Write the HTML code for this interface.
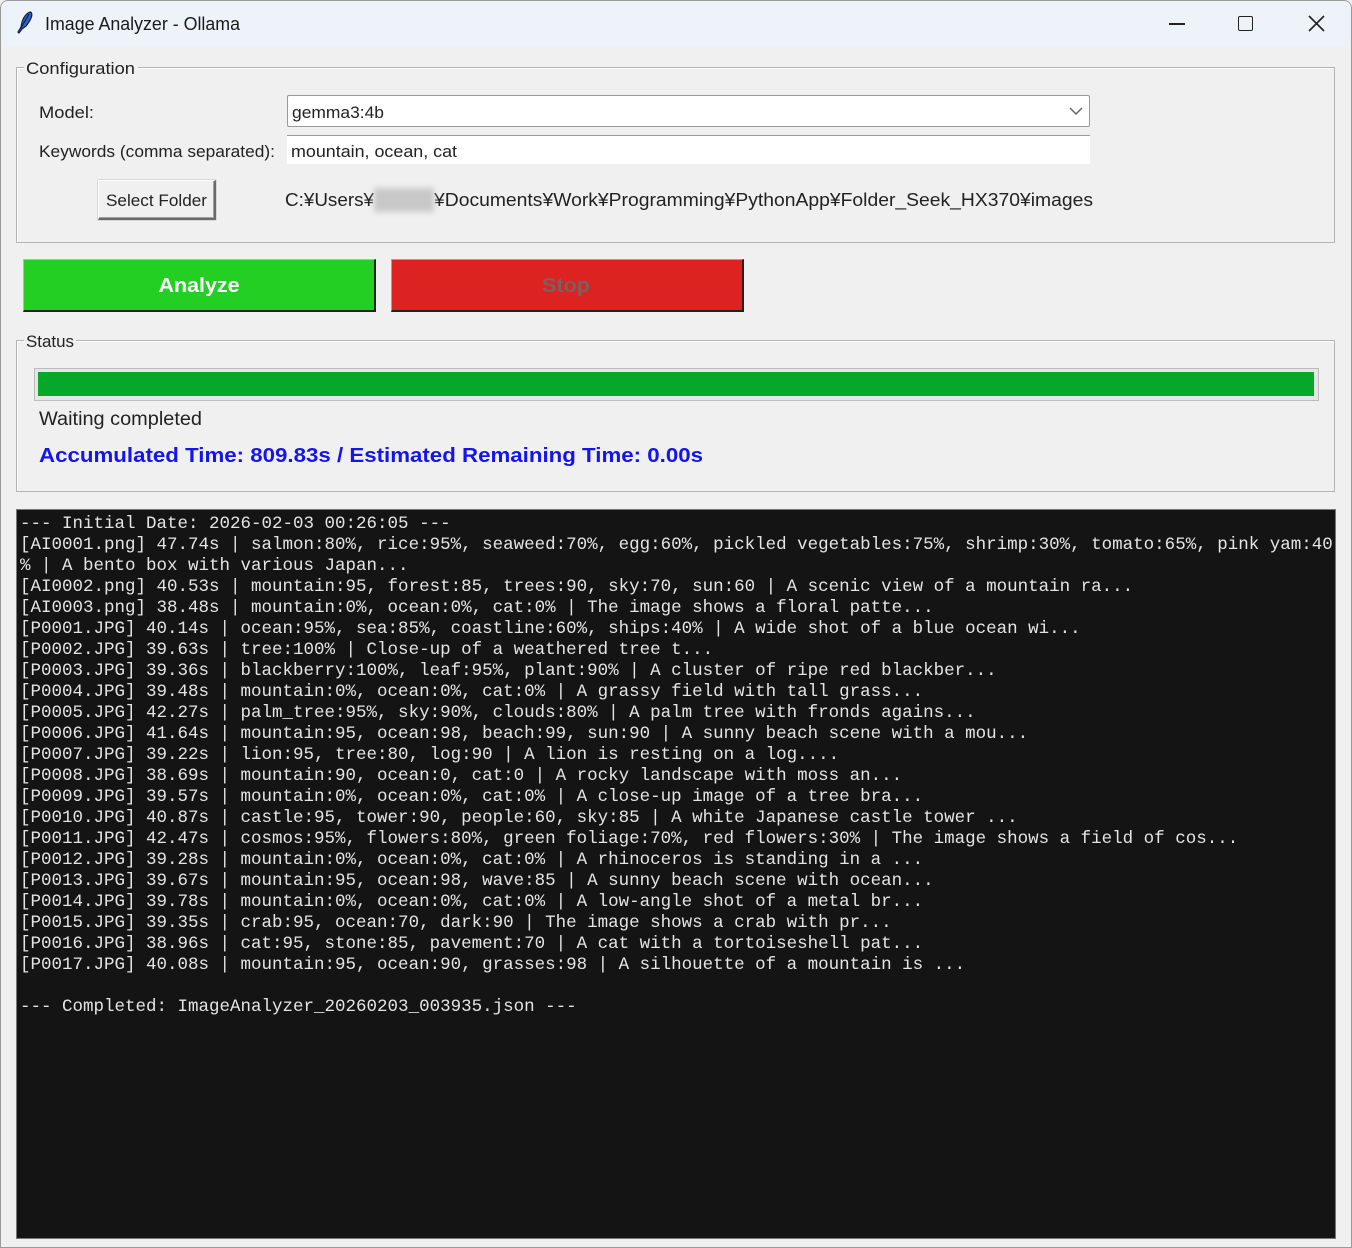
<!DOCTYPE html>
<html><head><meta charset="utf-8">
<style>
*{margin:0;padding:0;box-sizing:border-box}
body{width:1352px;height:1248px;background:#f0f0f0;position:relative;overflow:hidden;font-family:"Liberation Sans","DejaVu Sans",sans-serif;color:#111}
.abs{position:absolute}
svg.t{position:absolute;overflow:visible}
svg.t text{font-family:"Liberation Sans","DejaVu Sans",sans-serif}
.grp{position:absolute;border:1px solid #b4b4b4;box-shadow:1px 1px 0 #fff inset}
.log{position:absolute;left:16px;top:509px;width:1320px;height:730px;background:#141414;border:1px solid #777;padding:4px 0 0 3px;font-family:"Liberation Mono",monospace;font-size:17.5px;line-height:21px;color:#e4e4e4;white-space:pre;overflow:hidden}
</style></head><body>
<div class="abs" style="left:0;top:0;width:1352px;height:1248px;border:1px solid #9a9a9a;border-radius:8px 8px 0 0;pointer-events:none;z-index:5"></div>
<div class="abs" style="left:0;top:0;width:1352px;height:47px;background:#eef3fa;border-radius:8px 8px 0 0"></div>
<svg class="t" style="left:14px;top:10px" width="22" height="26" viewBox="0 0 22 26"><path d="M16 2 C20 3 17 10 12 16 L8 19 L5 23 L4 22 L7 17 C8 10 11 4 16 2Z" fill="#2d64c6" stroke="#102040" stroke-width="1.2"/><path d="M15 4 L7 18" stroke="#0b1a33" stroke-width="1"/></svg>
<svg class="t" style="left:45px;top:10px" width="200" height="28"><text x="0" y="20" font-size="18" fill="#1a1a1a" textLength="195" lengthAdjust="spacingAndGlyphs">Image Analyzer - Ollama</text></svg>
<div class="abs" style="left:1169px;top:23px;width:16px;height:1.5px;background:#222"></div>
<div class="abs" style="left:1238px;top:16px;width:15px;height:15px;border:1.5px solid #222;border-radius:2px"></div>
<svg class="t" style="left:1308px;top:15px" width="17" height="17"><path d="M1 1 L16 16 M16 1 L1 16" stroke="#222" stroke-width="1.6"/></svg>

<div class="grp" style="left:16px;top:67px;width:1319px;height:176px"></div>
<div class="abs" style="left:24px;top:56px;width:114px;height:22px;background:#f0f0f0"></div>
<svg class="t" style="left:26px;top:56px" width="120" height="24"><text x="0" y="18" font-size="17" fill="#222" textLength="109" lengthAdjust="spacingAndGlyphs">Configuration</text></svg>
<svg class="t" style="left:39px;top:100px" width="80" height="24"><text x="0" y="18" font-size="17" fill="#222" textLength="55" lengthAdjust="spacingAndGlyphs">Model:</text></svg>
<div class="abs" style="left:287px;top:95px;width:803px;height:32px;background:#fff;border:1px solid #999;border-radius:2px"></div>
<svg class="t" style="left:292px;top:100px" width="120" height="24"><text x="0" y="18" font-size="17" fill="#222" textLength="92" lengthAdjust="spacingAndGlyphs">gemma3:4b</text></svg>
<svg class="t" style="left:1068px;top:105px" width="16" height="12"><path d="M2 3 L8 9 L14 3" stroke="#666" stroke-width="1.5" fill="none"/></svg>
<svg class="t" style="left:39px;top:139px" width="250" height="24"><text x="0" y="18" font-size="17" fill="#222" textLength="236" lengthAdjust="spacingAndGlyphs">Keywords (comma separated):</text></svg>
<div class="abs" style="left:287px;top:135px;width:803px;height:29px;background:#fff;border-top:1px solid #9a9a9a"></div>
<svg class="t" style="left:291px;top:139px" width="200" height="24"><text x="0" y="18" font-size="17" fill="#222" textLength="166" lengthAdjust="spacingAndGlyphs">mountain, ocean, cat</text></svg>
<div class="abs" style="left:98px;top:180px;width:118px;height:40px;background:#f0f0f0;border:1px solid #fff;border-right:2px solid #6a6a6a;border-bottom:2px solid #6a6a6a;box-shadow:inset -1px -1px 0 #a0a0a0, 0 0 0 0.5px #c0c0c0"></div>
<svg class="t" style="left:106px;top:188px" width="110" height="24"><text x="0" y="18" font-size="17" fill="#222" textLength="101" lengthAdjust="spacingAndGlyphs">Select Folder</text></svg>
<svg class="t" style="left:285px;top:188px" width="820" height="26"><text x="0" y="18" font-size="18" fill="#222" textLength="89" lengthAdjust="spacingAndGlyphs">C:¥Users¥</text><text x="149" y="18" font-size="18" fill="#222" textLength="659" lengthAdjust="spacingAndGlyphs">¥Documents¥Work¥Programming¥PythonApp¥Folder_Seek_HX370¥images</text></svg>
<div class="abs" style="left:374px;top:188px;width:60px;height:24px;background:#c8c8c8;filter:blur(3px)"></div>

<div class="abs" style="left:23px;top:259px;width:353px;height:53px;background:#22cf22;border-top:1px solid #7be27b;border-left:1px solid #7be27b;border-right:2px solid #222;border-bottom:2px solid #222"></div>
<svg class="t" style="left:23px;top:270px" width="353" height="30"><text x="176" y="22" text-anchor="middle" font-size="20" font-weight="bold" fill="#fff" textLength="81" lengthAdjust="spacingAndGlyphs">Analyze</text></svg>
<div class="abs" style="left:391px;top:259px;width:353px;height:53px;background:#dd2222;border-top:1px solid #f08080;border-left:1px solid #f08080;border-right:2px solid #222;border-bottom:2px solid #222"></div>
<svg class="t" style="left:391px;top:270px" width="353" height="30"><text x="175" y="22" text-anchor="middle" font-size="20" font-weight="bold" fill="#7a6060" textLength="48" lengthAdjust="spacingAndGlyphs">Stop</text></svg>

<div class="grp" style="left:16px;top:340px;width:1319px;height:152px"></div>
<div class="abs" style="left:24px;top:330px;width:52px;height:22px;background:#f0f0f0"></div>
<svg class="t" style="left:26px;top:329px" width="60" height="24"><text x="0" y="18" font-size="17" fill="#222" textLength="48" lengthAdjust="spacingAndGlyphs">Status</text></svg>
<div class="abs" style="left:34px;top:368px;width:1285px;height:33px;background:#e6e6e6;border:1px solid #bcbcbc"></div>
<div class="abs" style="left:38px;top:372px;width:1276px;height:24px;background:#06a82a"></div>
<svg class="t" style="left:39px;top:406px" width="200" height="26"><text x="0" y="19" font-size="19" fill="#222" textLength="163" lengthAdjust="spacingAndGlyphs">Waiting completed</text></svg>
<svg class="t" style="left:39px;top:442px" width="700" height="28"><text x="0" y="20" font-size="20" font-weight="bold" fill="#1414ee" textLength="664" lengthAdjust="spacingAndGlyphs">Accumulated Time: 809.83s / Estimated Remaining Time: 0.00s</text></svg>

<div class="log">--- Initial Date: 2026-02-03 00:26:05 ---
[AI0001.png] 47.74s | salmon:80%, rice:95%, seaweed:70%, egg:60%, pickled vegetables:75%, shrimp:30%, tomato:65%, pink yam:40
% | A bento box with various Japan...
[AI0002.png] 40.53s | mountain:95, forest:85, trees:90, sky:70, sun:60 | A scenic view of a mountain ra...
[AI0003.png] 38.48s | mountain:0%, ocean:0%, cat:0% | The image shows a floral patte...
[P0001.JPG] 40.14s | ocean:95%, sea:85%, coastline:60%, ships:40% | A wide shot of a blue ocean wi...
[P0002.JPG] 39.63s | tree:100% | Close-up of a weathered tree t...
[P0003.JPG] 39.36s | blackberry:100%, leaf:95%, plant:90% | A cluster of ripe red blackber...
[P0004.JPG] 39.48s | mountain:0%, ocean:0%, cat:0% | A grassy field with tall grass...
[P0005.JPG] 42.27s | palm_tree:95%, sky:90%, clouds:80% | A palm tree with fronds agains...
[P0006.JPG] 41.64s | mountain:95, ocean:98, beach:99, sun:90 | A sunny beach scene with a mou...
[P0007.JPG] 39.22s | lion:95, tree:80, log:90 | A lion is resting on a log....
[P0008.JPG] 38.69s | mountain:90, ocean:0, cat:0 | A rocky landscape with moss an...
[P0009.JPG] 39.57s | mountain:0%, ocean:0%, cat:0% | A close-up image of a tree bra...
[P0010.JPG] 40.87s | castle:95, tower:90, people:60, sky:85 | A white Japanese castle tower ...
[P0011.JPG] 42.47s | cosmos:95%, flowers:80%, green foliage:70%, red flowers:30% | The image shows a field of cos...
[P0012.JPG] 39.28s | mountain:0%, ocean:0%, cat:0% | A rhinoceros is standing in a ...
[P0013.JPG] 39.67s | mountain:95, ocean:98, wave:85 | A sunny beach scene with ocean...
[P0014.JPG] 39.78s | mountain:0%, ocean:0%, cat:0% | A low-angle shot of a metal br...
[P0015.JPG] 39.35s | crab:95, ocean:70, dark:90 | The image shows a crab with pr...
[P0016.JPG] 38.96s | cat:95, stone:85, pavement:70 | A cat with a tortoiseshell pat...
[P0017.JPG] 40.08s | mountain:95, ocean:90, grasses:98 | A silhouette of a mountain is ...

--- Completed: ImageAnalyzer_20260203_003935.json ---</div>
</body></html>
